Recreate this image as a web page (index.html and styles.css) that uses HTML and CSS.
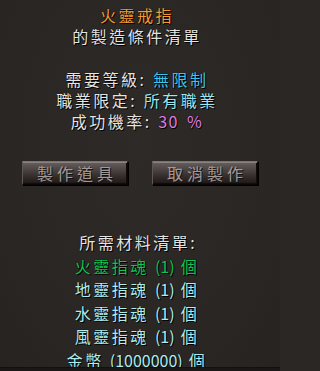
FILE: index.html
```html
<!DOCTYPE html>
<html lang="zh-Hant">
<head>
<meta charset="utf-8">
<title>火靈戒指</title>
<link rel="stylesheet" href="styles.css">
</head>
<body>
<div class="panel">
  <div class="content">
    <div class="head">
      <div class="line title">火靈戒指</div>
      <div class="line">的製造條件清單</div>
    </div>
    <div class="info">
      <div class="line">需要等級<span class="colon">:</span><span class="cyan">無限制</span></div>
      <div class="line">職業限定<span class="colon">:</span><span class="lcyan">所有職業</span></div>
      <div class="line">成功機率<span class="colon">:</span><span class="pink">30 %</span></div>
    </div>
    <div class="buttons">
      <div class="btn">製作道具</div>
      <div class="btn">取消製作</div>
    </div>
    <div class="mats">
      <div class="line">所需材料清單<span class="n">:</span></div>
      <div class="line green">火靈指魂 <span class="n">(1)</span> 個</div>
      <div class="line mat">地靈指魂 <span class="n">(1)</span> 個</div>
      <div class="line mat">水靈指魂 <span class="n">(1)</span> 個</div>
      <div class="line mat">風靈指魂 <span class="n">(1)</span> 個</div>
      <div class="line mat">金幣 <span class="n">(1000000)</span> 個</div>
    </div>
  </div>
  <div class="bottom"></div>
</div>
</body>
</html>
```

FILE: styles.css
```css
html, body {
  margin: 0;
  padding: 0;
  width: 280px;
  height: 371px;
  overflow: hidden;
  background: #2b2725;
}

.panel {
  width: 280px;
  height: 371px;
  display: flex;
  flex-direction: column;
  font-family: "Noto Sans CJK TC", "Noto Sans", sans-serif;
  font-size: 16px;
  color: #e6e4e2;
  background:
    radial-gradient(ellipse at 50% 40%, #2e2a28 0%, #2a2624 70%, #272321 100%);
}

.content {
  height: 367px;
  overflow: hidden;
  display: flex;
  flex-direction: column;
  align-items: center;
  padding-top: 5px;
  box-sizing: border-box;
}

.bottom {
  height: 4px;
  background: #1b1716;
  border-top: 1px solid #141010;
  box-sizing: border-box;
}

.head,
.info,
.mats {
  display: flex;
  flex-direction: column;
  align-items: center;
  padding-right: 6px;
}

.line {
  letter-spacing: 2.5px;
  white-space: nowrap;
  text-align: center;
  text-shadow: 1px 1px 0 #050303, 0 0 1px #000;
}

.n {
  letter-spacing: 0;
}

.colon {
  letter-spacing: 0;
  margin-right: 9px;
}

.head .line,
.info .line {
  line-height: 21px;
  height: 21px;
}

.info {
  margin-top: 22px;
}

.title { color: #f49a34; }
.cyan { color: #3cc6ee; }
.lcyan { color: #9ee6ee; }
.pink { color: #e07ee0; letter-spacing: 1.5px; word-spacing: 3px; }
.green { color: #14c251; }
.mat { color: #aeeeee; }

.buttons {
  margin-top: 29px;
  display: flex;
  gap: 24px;
}

.btn {
  width: 106px;
  height: 24px;
  box-sizing: border-box;
  border: 1px solid #080606;
  border-top-color: #7a7270;
  border-left-color: #5e5654;
  background: linear-gradient(#66605d 0%, #4c4442 35%, #322a28 70%, #1d1615 100%);
  box-shadow: inset 0 1px 0 #8a8280, inset -1px -1px 0 #110b0a, 1px 1px 0 #000;
  color: #a29a99;
  font-size: 16px;
  line-height: 22px;
  letter-spacing: 4px;
  padding-left: 4px;
  text-align: center;
  text-shadow: 1px 1px 0 #141010;
}

.mats {
  margin-top: 46px;
}

.mats .line {
  line-height: 23.5px;
  height: 23.5px;
}
```
